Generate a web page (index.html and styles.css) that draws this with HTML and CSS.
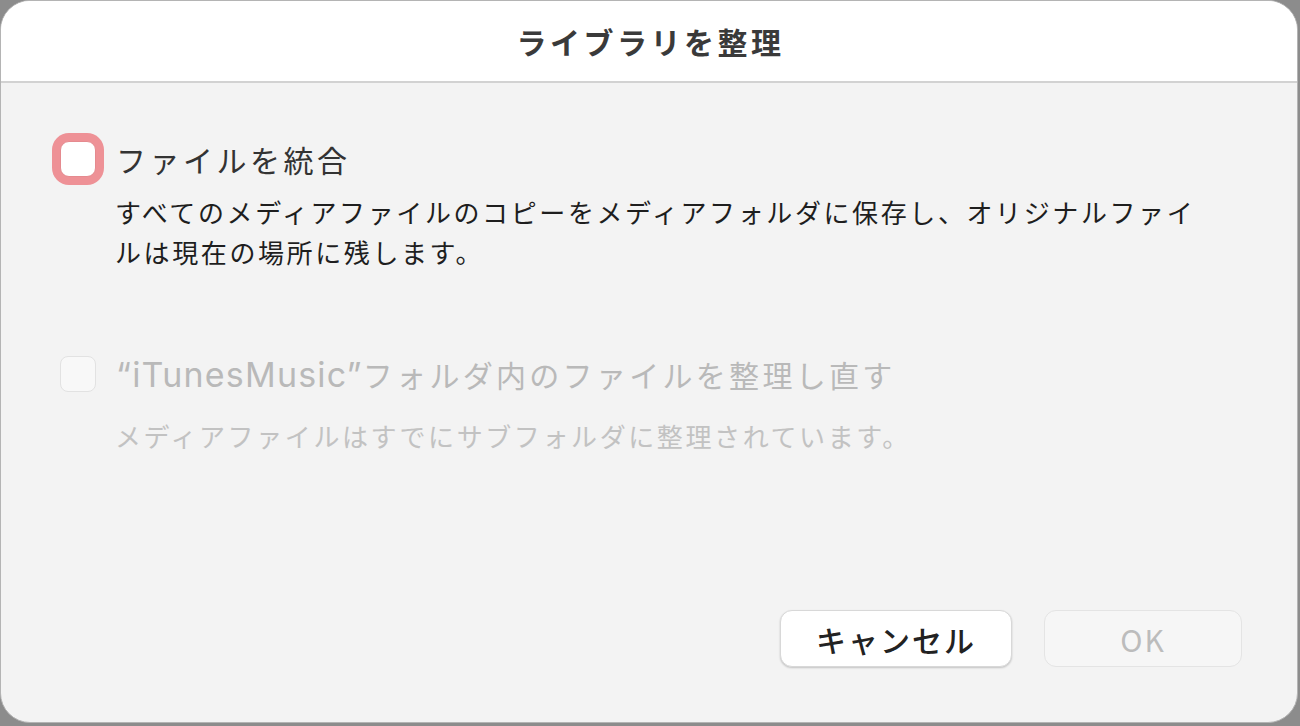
FILE: index.html
```html
<!DOCTYPE html>
<html lang="ja">

<head>
  <meta charset="UTF-8" />
  <meta name="viewport" content="width=device-width, initial-scale=1.0" />
  <title>ライブラリを整理</title>
  <link rel="stylesheet" href="styles.css">
</head>

<body>
  <section class="dialog">
    <header class="dialog-title">ライブラリを整理</header>

    <div class="dialog-body">
      <div class="option">
        <div class="option-row">
          <span class="check focus"></span>
          <span class="option-label">ファイルを統合</span>
        </div>
        <div class="option-desc">すべてのメディアファイルのコピーをメディアフォルダに保存し、オリジナルファイ<br>ルは現在の場所に残します。</div>
      </div>

      <div class="option disabled">
        <div class="option-row">
          <span class="check"></span>
          <span class="option-label"><span class="latin">“iTunesMusic”</span>フォルダ内のファイルを整理し直す</span>
        </div>
        <div class="option-desc">メディアファイルはすでにサブフォルダに整理されています。</div>
      </div>

      <div class="buttons">
        <button class="btn cancel-btn">キャンセル</button>
        <button class="btn ok-btn" disabled>OK</button>
      </div>
    </div>
  </section>
</body>

</html>
```

FILE: styles.css
```css
* {
  box-sizing: border-box;
}

body {
  margin: 0;
  padding: 0;
  background-color: #8c8c8c;
  font-family: "Noto Sans CJK JP", "Noto Sans", sans-serif;
  color: #333333;
}

.dialog {
  width: 1298px;
  height: 723px;
  display: flex;
  flex-direction: column;
  background-color: #f3f3f3;
  border: 1px solid #b4b4b4;
  border-radius: 30px;
  overflow: hidden;
}

.dialog-title {
  height: 82px;
  flex-shrink: 0;
  display: flex;
  align-items: center;
  justify-content: center;
  padding-left: 3px;
  background-color: #ffffff;
  border-bottom: 2px solid #d2d2d2;
  font-size: 30px;
  font-weight: 700;
  letter-spacing: 3.5px;
  color: #3a3a3a;
}

.dialog-body {
  flex: 1;
  display: flex;
  flex-direction: column;
  padding: 58px 55px 55px 59px;
}

.option-row {
  display: flex;
  align-items: center;
  gap: 20px;
  height: 36px;
}

.check {
  width: 36px;
  height: 36px;
  flex-shrink: 0;
  background-color: #ffffff;
  border: 1px solid #d6d6d6;
  border-radius: 8px;
}

.check.focus {
  border-color: #e58a8f;
  box-shadow: 0 0 0 8px #ee9196;
  border-radius: 9px;
}

.option-label {
  font-size: 30px;
  letter-spacing: 3.5px;
  color: #333333;
}

.option-desc {
  margin: 15px 0 0 55px;
  font-size: 26px;
  line-height: 40px;
  letter-spacing: 2.6px;
  color: #1e1e1e;
}

.option.disabled {
  margin-top: 84px;
}

.option.disabled .check {
  background-color: #f8f8f8;
  border-color: #e2e2e2;
}

.option.disabled .option-label {
  color: #b9b9b9;
  letter-spacing: 3.3px;
}

.option.disabled .option-label .latin {
  font-family: "Inter", "Noto Sans", sans-serif;
  font-size: 34px;
  letter-spacing: 1.2px;
}

.option.disabled .option-desc {
  margin-top: 24px;
  color: #c2c2c2;
}

.buttons {
  margin-top: auto;
  display: flex;
  justify-content: flex-end;
  gap: 32px;
}

.btn {
  height: 57px;
  font-family: inherit;
  font-size: 30px;
  border-radius: 12px;
  letter-spacing: 2px;
}

.cancel-btn {
  width: 232px;
  background-color: #ffffff;
  color: #222222;
  font-weight: 500;
  border: 1px solid #d8d8d8;
  box-shadow: 0 1px 2px rgba(0, 0, 0, 0.2);
}

.ok-btn {
  width: 198px;
  background-color: #f6f6f6;
  color: #bcbcbc;
  border: 1px solid #e4e4e4;
}
```
